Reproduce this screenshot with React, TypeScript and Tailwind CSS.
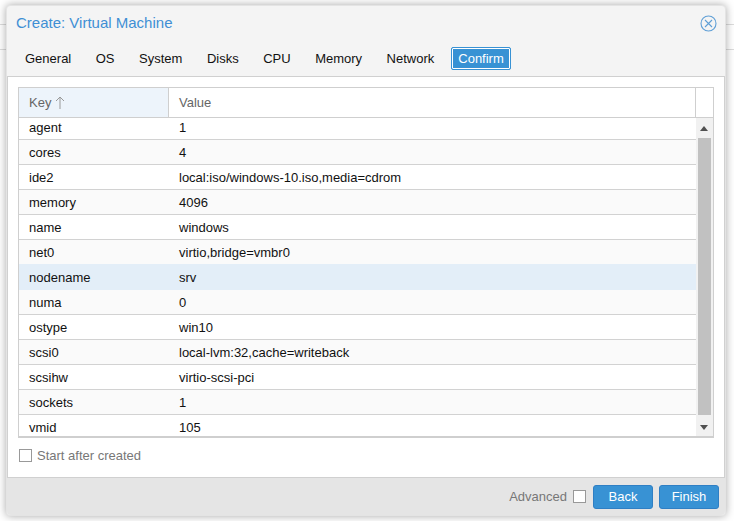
const tabs = ['General', 'OS', 'System', 'Disks', 'CPU', 'Memory', 'Network'];

const rows = [
  ['agent', '1'],
  ['cores', '4'],
  ['ide2', 'local:iso/windows-10.iso,media=cdrom'],
  ['memory', '4096'],
  ['name', 'windows'],
  ['net0', 'virtio,bridge=vmbr0'],
  ['nodename', 'srv'],
  ['numa', '0'],
  ['ostype', 'win10'],
  ['scsi0', 'local-lvm:32,cache=writeback'],
  ['scsihw', 'virtio-scsi-pci'],
  ['sockets', '1'],
  ['vmid', '105'],
];

function CloseIcon() {
  return (
    <svg width="17" height="17" viewBox="0 0 17 17" fill="none" stroke="#5f9fd6" strokeWidth="1.1">
      <circle cx="8.5" cy="8.5" r="7.5" />
      <path d="M5 5l7 7M12 5l-7 7" />
    </svg>
  );
}

function rowClass(k: string, index: number) {
  if (k === 'nodename') return 'h-[25px] pt-[2px] bg-[#e3eef8] border-b border-[#e3eef8]';
  if (k === 'net0') return 'h-[25px] pt-[2px] bg-[#fafafa] border-b border-[#e3eef8]';
  if (k === 'agent') return 'h-[22px] pb-[1px] bg-white border-b border-[#d2d2d2]';
  if (k === 'vmid') return 'h-[21px] pt-[4px] bg-white';
  const bg = index % 2 === 0 ? 'bg-white' : 'bg-[#fafafa]';
  return `h-[25px] pt-[2px] ${bg} border-b border-[#d2d2d2]`;
}

function Row({ k, v, index }: { k: string; v: string; index: number }) {
  return (
    <div className={`flex items-center text-[13px] text-[#111] ${rowClass(k, index)}`}>
      <div className="w-[150px] shrink-0 pl-[10px]">{k}</div>
      <div className="pl-[10px]">{v}</div>
    </div>
  );
}

export default function App() {
  return (
    <div className="relative h-[521px] w-[734px] overflow-hidden bg-white px-[6px] pb-[5px] pt-[5px] font-['Liberation_Sans',Arial,sans-serif]">
      {/* page behind the modal */}
      <div className="absolute inset-x-0 top-[24px] h-px bg-[#dcdcdc]" />
      <div className="absolute inset-x-0 top-[49px] h-px bg-[#dcdcdc]" />
      <div className="relative flex h-[511px] w-[720px] flex-col rounded-[4px] border border-[#e4e4e4] bg-[#f4f4f4] shadow-[0_0_8px_rgba(0,0,0,0.35)]">
        <div className="flex h-[36px] shrink-0 items-center justify-between pb-[1px] pl-[9px] pr-[8px]">
          <span className="text-[15px] text-[#3f8fd4]">Create: Virtual Machine</span>
          <CloseIcon />
        </div>
        <div className="flex h-[34px] shrink-0 items-center gap-[4.5px] pb-[1px] pl-[8px]">
          {tabs.map((t) => (
            <span key={t} className="px-[10px] text-[13px] text-[#111]">
              {t}
            </span>
          ))}
          <span className="ml-[2.5px] flex h-[23px] items-center rounded-[2px] border border-[#3892d4] bg-[#3892d4] px-[6px] text-[13px] text-white shadow-[inset_0_0_0_1px_#ffffff]">
            Confirm
          </span>
        </div>
        <div className="flex min-h-0 flex-1 flex-col border border-[#d0d0d0] bg-white px-[10px] pt-[10px]">
          <div className="flex h-[351px] w-[696px] flex-col border border-b-2 border-[#cfcfcf]">
            <div className="flex h-[30px] shrink-0 border-b border-[#cfcfcf] text-[13px] text-[#666]">
              <div className="flex w-[150px] items-center gap-[4px] border-r border-[#cfcfcf] bg-[#edf4fb] pl-[10px]">
                Key
                <svg width="10" height="14" viewBox="0 0 10 14" fill="none" stroke="#9a9a9a" strokeWidth="1">
                  <path d="M5 13V1M1 5l4-4 4 4" />
                </svg>
              </div>
              <div className="flex flex-1 items-center pl-[10px]">Value</div>
              <div className="w-[18px] border-l border-[#cfcfcf]" />
            </div>
            <div className="flex min-h-0 flex-1">
              <div className="min-w-0 flex-1">
                {rows.map(([k, v], i) => (
                  <Row key={k} k={k} v={v} index={i} />
                ))}
              </div>
              <div className="flex w-[17px] shrink-0 flex-col items-center bg-[#f1f1f1]">
                <div className="flex h-[20px] shrink-0 items-center justify-center pr-[1px]">
                  <svg width="8" height="5" viewBox="0 0 8 5" fill="#505050">
                    <path d="M4 0l4 5H0z" />
                  </svg>
                </div>
                <div className="w-[13px] flex-1 bg-[#c1c1c1]" />
                <div className="flex h-[21px] shrink-0 items-center justify-center pr-[1px] pt-[3px]">
                  <svg width="8" height="5" viewBox="0 0 8 5" fill="#505050">
                    <path d="M0 0h8L4 5z" />
                  </svg>
                </div>
              </div>
            </div>
          </div>
          <label className="mt-[8px] flex items-center gap-[5px] pl-[1px] text-[13px] text-[#777]">
            <span className="h-[13px] w-[13px] border border-[#999] bg-white" />
            Start after created
          </label>
        </div>
        <div className="flex h-[37px] shrink-0 items-center justify-end gap-[6px] rounded-b-[4px] bg-[#e5e5e5] pr-[6px]">
          <span className="text-[13px] text-[#777]">Advanced</span>
          <span className="mr-[1px] h-[13px] w-[13px] border border-[#999] bg-white" />
          <button className="flex h-[24px] w-[60px] items-center justify-center rounded-[3px] border border-[#2f7fc4] bg-[#3892d4] text-[13px] text-white">
            Back
          </button>
          <button className="flex h-[24px] w-[60px] items-center justify-center rounded-[3px] border border-[#2f7fc4] bg-[#3892d4] text-[13px] text-white">
            Finish
          </button>
        </div>
      </div>
    </div>
  );
}
